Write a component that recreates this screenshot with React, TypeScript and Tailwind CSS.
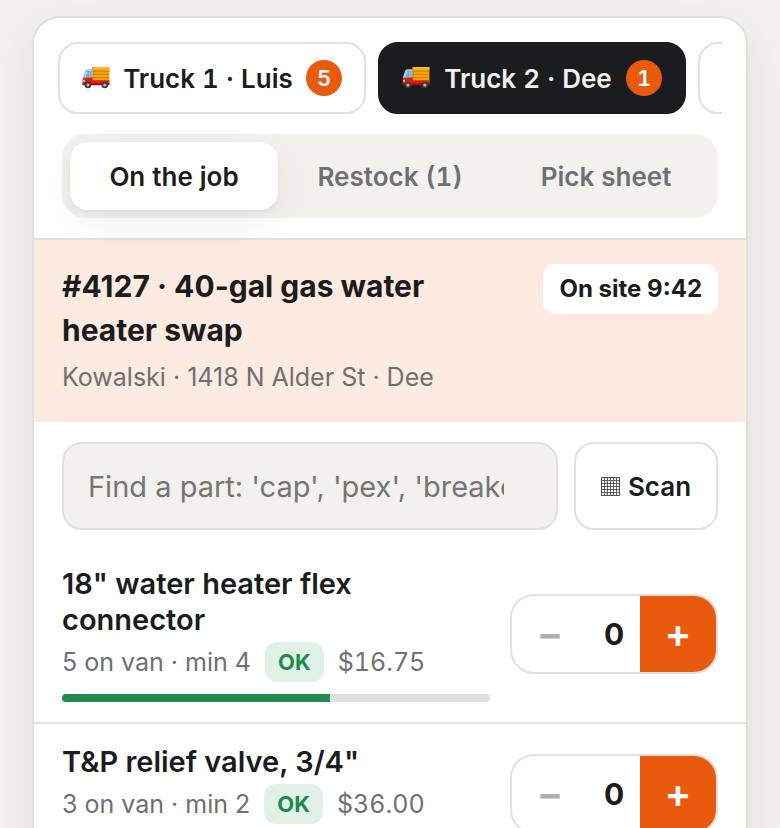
import React, { useState } from 'react';
import { clsx } from 'clsx';

interface Truck {
  id: string;
  name: string;
  alerts: number;
}

interface Part {
  id: string;
  name: string;
  onVan: number;
  min: number;
  price: string;
}

const TRUCKS: Truck[] = [
  { id: 't1', name: 'Truck 1 · Luis', alerts: 5 },
  { id: 't2', name: 'Truck 2 · Dee', alerts: 1 },
  { id: 't3', name: 'Truck 3', alerts: 0 },
];

const TABS = [
  { id: 'job', label: 'On the job' },
  { id: 'restock', label: 'Restock (1)' },
  { id: 'pick', label: 'Pick sheet' },
];

const PARTS: Part[] = [
  { id: 'flex', name: '18" water heater flex connector', onVan: 5, min: 4, price: '$16.75' },
  { id: 'tp', name: 'T&P relief valve, 3/4"', onVan: 3, min: 2, price: '$36.00' },
];

function TruckIcon() {
  return (
    <svg viewBox="0 0 28 24" className="h-6 w-7 shrink-0" aria-hidden="true">
      <rect x="10.6" y="1" width="16.8" height="16" rx="0.6" fill="#f5a10c" />
      <path d="M10.6 1h16.8v2.4H10.6z" fill="#fbb92d" />
      <path d="M10.6 5.2h16.8M10.6 8.4h16.8M10.6 11.6h16.8" stroke="#d27c08" strokeWidth="0.9" />
      <path d="M10.8 1v13" stroke="#b9700d" strokeWidth="0.8" />
      <path d="M3.4 4.2Q4 3.2 5.4 3.2H10.6v10.4H1V11z" fill="#b9c4c9" />
      <path d="M3.7 5H7.4v6H1.8z" fill="#58b7d3" />
      <path d="M3.9 5.6h1.8L3.4 10.8H2z" fill="#a5e2f0" />
      <rect x="8" y="5" width="1.8" height="5.4" fill="#6fb9cc" />
      <path d="M1.6 11.8L10.6 11.2V14.2H27.4v4.6H.6V13.8Q.6 12.2 1.6 11.8z" fill="#dc1d16" />
      <path d="M.4 17.2H27.4v2H.4z" fill="#a80f10" />
      <rect x="1" y="13.8" width="2" height="1.7" rx="0.6" fill="#ffe9a8" />
      <circle cx="6" cy="19" r="3.3" fill="#3a3a3c" />
      <circle cx="6" cy="19" r="1.6" fill="#b5b8ba" />
      <circle cx="22.8" cy="19" r="3.3" fill="#3a3a3c" />
      <circle cx="22.8" cy="19" r="1.6" fill="#b5b8ba" />
    </svg>
  );
}

function GridIcon() {
  return (
    <svg viewBox="0 0 19 19" className="h-[19px] w-[19px] shrink-0" aria-hidden="true">
      <path d="M.5.5h18v18H.5z" fill="none" stroke="#4a4b4c" />
      <path
        d="M3.5.5v18M6.5.5v18M9.5.5v18M12.5.5v18M15.5.5v18M.5 3.5h18M.5 6.5h18M.5 9.5h18M.5 12.5h18M.5 15.5h18"
        fill="none"
        stroke="#5c5d5e"
      />
    </svg>
  );
}

function PartRow({ part }: { part: Part }) {
  const [count, setCount] = useState(0);
  const level = Math.min(100, (part.onVan / (part.min * 2)) * 100);

  return (
    <li className="flex items-center gap-5 border-b-2 border-[#e0e0de] px-7 py-5">
      <div className="min-w-0 flex-1">
        <h3 className="text-[29px] leading-9 font-semibold">{part.name}</h3>
        <div className="mt-1 flex items-center gap-[14px] text-[25px] leading-10 text-[#6e7073]">
          <span>{part.onVan} on van · min {part.min}</span>
          <span className="rounded-xl bg-[#e0f2e8] px-[13px] text-[22px] font-bold text-[#218a4e]">OK</span>
          <span className="tabular-nums">{part.price}</span>
        </div>
        <div className="mt-3 h-2 overflow-hidden rounded-full bg-[#e0e0de]">
          <div className="h-full bg-[#218a4e]" style={{ width: `${level}%` }} />
        </div>
      </div>

      {/* Used-on-job stepper */}
      <div className="flex h-20 shrink-0 overflow-hidden rounded-3xl border-2 border-[#e0e0de]">
        <button
          type="button"
          aria-label={`Remove ${part.name}`}
          disabled={count === 0}
          onClick={() => setCount(count - 1)}
          className="w-19 text-[40px] font-semibold disabled:text-[#afafaf]"
        >−</button>
        <output className="flex w-13 items-center justify-center text-[30px] font-bold">{count}</output>
        <button
          type="button"
          aria-label={`Add ${part.name}`}
          onClick={() => setCount(count + 1)}
          className="w-19 bg-[#e85a0c] text-[40px] font-semibold text-white"
        >+</button>
      </div>
    </li>
  );
}

export default function App() {
  const [truck, setTruck] = useState('t2');
  const [tab, setTab] = useState('job');
  const [query, setQuery] = useState('');

  return (
    <div className="min-h-screen bg-[#f2f1ed] px-8 py-4 font-['Inter',sans-serif] text-[#1b1c1d] [font-optical-sizing:none]">
      <main className="overflow-hidden rounded-[28px] border-2 border-[#e0e0de] bg-white shadow-[0_16px_48px_rgba(0,0,0,0.07)]">
        <header className="border-b-2 border-[#e0e0de] px-6 pt-6 pb-5">
          <div className="flex gap-3 overflow-hidden">
            {TRUCKS.map((t) => (
              <button
                key={t.id}
                type="button"
                onClick={() => setTruck(t.id)}
                className={clsx(
                  'flex h-18 min-w-[308px] shrink-0 items-center justify-between gap-3 rounded-[20px] border-2 px-[22px] text-[26px] font-semibold whitespace-nowrap tabular-nums',
                  truck === t.id ? 'border-[#1b1c1d] bg-[#1b1c1d] text-[#f2f1ed]' : 'border-[#e0e0de] bg-white'
                )}
              >
                <TruckIcon />
                <span>{t.name}</span>
                {t.alerts > 0 && (
                  <span className="flex h-9 w-9 items-center justify-center rounded-full bg-[#e85a0c] text-[22px] text-white">
                    {t.alerts}
                  </span>
                )}
              </button>
            ))}
          </div>

          <nav className="mx-1 mt-5 grid grid-cols-3 gap-2 rounded-3xl bg-[#f2f1ed] p-2">
            {TABS.map((t) => (
              <button
                key={t.id}
                type="button"
                onClick={() => setTab(t.id)}
                className={clsx(
                  'h-17 rounded-[18px] text-[26px] font-semibold tabular-nums',
                  tab === t.id ? 'bg-white shadow-[0_12px_40px_rgba(0,0,0,0.06),0_2px_4px_rgba(0,0,0,0.05)]' : 'text-[#6e7073]'
                )}
              >
                {t.label}
              </button>
            ))}
          </nav>
        </header>

        {/* Current job */}
        <section className="flex items-start justify-between gap-5 bg-[#fdeae0] px-7 py-6">
          <div>
            <h2 className="max-w-[400px] text-[30px] leading-11 font-bold">#4127 · 40-gal gas water heater swap</h2>
            <p className="mt-1 text-[25px] leading-[42px] text-[#6e7073]">Kowalski · 1418 N Alder St · Dee</p>
          </div>
          <span className="shrink-0 rounded-xl bg-white px-4 text-[24px] leading-[50px] font-bold">On site 9:42</span>
        </section>

        <div className="flex gap-4 px-7 pt-5 pb-4">
          <input
            type="text"
            aria-label="Find a part"
            value={query}
            onChange={(e) => setQuery(e.target.value)}
            placeholder="Find a part: 'cap', 'pex', 'breaker'"
            className="h-22 min-w-0 flex-1 rounded-[20px] border-2 border-[#e0e0de] bg-[#f2f1ed] pr-[52px] pl-6 text-[29px] placeholder:text-[#757575]"
          />
          <button
            type="button"
            className="flex h-22 w-36 shrink-0 items-center justify-center gap-2 rounded-[20px] border-2 border-[#e0e0de] text-[26px] font-semibold"
          >
            <GridIcon />
            Scan
          </button>
        </div>

        <ul>
          {PARTS.map((part) => (
            <PartRow key={part.id} part={part} />
          ))}
        </ul>
      </main>
    </div>
  );
}
